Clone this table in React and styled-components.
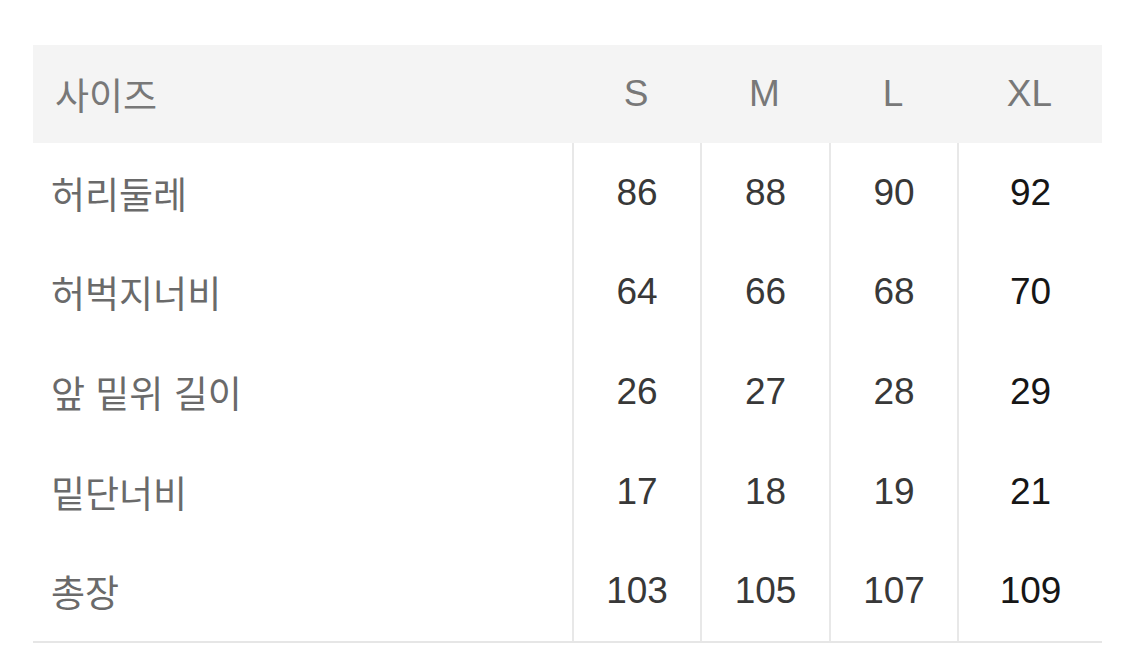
import React from 'react';
import styled, { createGlobalStyle } from 'styled-components';

const GlobalStyle = createGlobalStyle`
  html, body {
    margin: 0;
    padding: 0;
    background: #ffffff;
  }
  body {
    font-family: "Liberation Sans", "Noto Sans CJK KR", sans-serif;
  }
`;

const Page = styled.div`
  width: 1125px;
  height: 672px;
  padding: 45px 0 0 33px;
  box-sizing: border-box;
  overflow: hidden;
`;

const Table = styled.div`
  width: 1069px;
  display: grid;
  grid-template-columns: 539px 128px 129px 128px 145px;
  grid-template-rows: 98px repeat(5, 99.6px);
  border-bottom: 2px solid #e6e6e6;
`;

const HeadCell = styled.div`
  background: #f4f4f4;
  display: flex;
  align-items: center;
  justify-content: ${p => (p.$label ? 'flex-start' : 'center')};
  padding-left: ${p => (p.$label ? '22px' : '0')};
  color: #787878;
  font-size: ${p => (p.$label ? '37px' : '37px')};
  font-family: ${p => (p.$label
    ? '"Noto Sans CJK KR", "Liberation Sans", sans-serif'
    : '"Liberation Sans", sans-serif')};
`;

const LabelCell = styled.div`
  display: flex;
  align-items: center;
  padding-left: 18px;
  color: #6a6a6a;
  font-size: 37px;
  font-family: "Noto Sans CJK KR", "Liberation Sans", sans-serif;
  word-spacing: 2px;
`;

const ValueCell = styled.div`
  display: flex;
  align-items: center;
  justify-content: center;
  border-left: 2px solid #e8e8e8;
  color: ${p => (p.$strong ? '#161616' : '#383838')};
  font-size: 37px;
  font-family: "Liberation Sans", sans-serif;
`;

const sizes = ['S', 'M', 'L', 'XL'];

const rows = [
  { label: '허리둘레', values: [86, 88, 90, 92] },
  { label: '허벅지너비', values: [64, 66, 68, 70] },
  { label: '앞 밑위 길이', values: [26, 27, 28, 29] },
  { label: '밑단너비', values: [17, 18, 19, 21] },
  { label: '총장', values: [103, 105, 107, 109] },
];

export default function App() {
  return (
    <>
      <GlobalStyle />
      <Page>
        <Table>
          <HeadCell $label>사이즈</HeadCell>
          {sizes.map(s => (
            <HeadCell key={s}>{s}</HeadCell>
          ))}
          {rows.map(row => (
            <React.Fragment key={row.label}>
              <LabelCell>{row.label}</LabelCell>
              {row.values.map((v, i) => (
                <ValueCell key={i} $strong={i === 3}>{v}</ValueCell>
              ))}
            </React.Fragment>
          ))}
        </Table>
      </Page>
    </>
  );
}
